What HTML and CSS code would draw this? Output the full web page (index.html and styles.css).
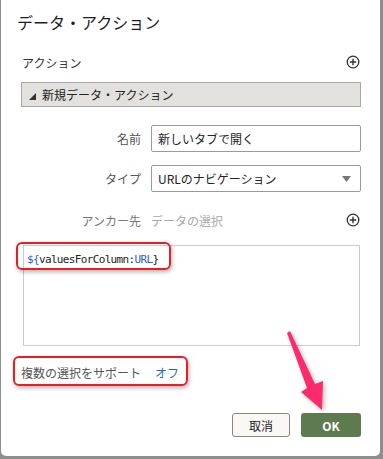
FILE: index.html
```html
<!DOCTYPE html>
<html lang="ja">
<head>
  <meta charset="UTF-8" />
  <meta name="viewport" content="width=device-width, initial-scale=1" />
  <title>データ・アクション</title>
  <link rel="stylesheet" href="styles.css">
</head>
<body>
  <div class="dialog">
    <h1 class="title">データ・アクション</h1>

    <div class="section-row">
      <span class="section-label">アクション</span>
      <svg class="plus" width="14" height="14" viewBox="0 0 14 14">
        <circle cx="7" cy="7" r="5.8" fill="none" stroke="#333" stroke-width="1.3"/>
        <path d="M7 3.8v6.4M3.8 7h6.4" stroke="#333" stroke-width="1.4"/>
      </svg>
    </div>

    <div class="action-head">
      <svg class="collapse" width="7" height="7" viewBox="0 0 7 7"><polygon points="7,0 7,7 0,7" fill="#333"/></svg>
      <span>新規データ・アクション</span>
    </div>

    <div class="field field-name">
      <label>名前</label>
      <div class="input">新しいタブで開く</div>
    </div>

    <div class="field field-type">
      <label>タイプ</label>
      <div class="input select">
        <span>URLのナビゲーション</span>
        <svg width="9" height="6" viewBox="0 0 9 6"><polygon points="0,0 9,0 4.5,6" fill="#777"/></svg>
      </div>
    </div>

    <div class="field field-anchor">
      <label>アンカー先</label>
      <div class="anchor-value">
        <span class="placeholder">データの選択</span>
        <svg class="plus" width="14" height="14" viewBox="0 0 14 14">
          <circle cx="7" cy="7" r="5.8" fill="none" stroke="#333" stroke-width="1.3"/>
          <path d="M7 3.8v6.4M3.8 7h6.4" stroke="#333" stroke-width="1.4"/>
        </svg>
      </div>
    </div>

    <div class="url-box">
      <code><span class="tok">${</span>valuesForColumn:<span class="tok">URL</span>}</code>
    </div>

    <div class="multi-row">
      <span class="multi-label">複数の選択をサポート</span>
      <span class="toggle">オフ</span>
    </div>

    <div class="buttons">
      <button class="btn btn-cancel">取消</button>
      <button class="btn btn-ok">OK</button>
    </div>

    <!-- annotations -->
    <div class="mark mark-url"></div>
    <div class="mark mark-multi"></div>
    <svg class="arrow" width="379" height="456" viewBox="0 0 379 456">
      <polygon points="287,333 290,331 315,384 323,381 322,410 301,392 307,388" fill="#ff2a6c"/>
    </svg>
  </div>
</body>
</html>
```

FILE: styles.css
```css
html, body {
  height: 100%;
}
body {
  margin: 0;
  background: #8e8e8e;
  font-family: "Noto Sans CJK JP", "Noto Sans", sans-serif;
  font-size: 12px;
  color: #333;
}
.dialog {
  position: relative;
  box-sizing: border-box;
  width: 379px;
  height: 456px;
  margin-left: 1px;
  background: #fff;
  border-radius: 0 0 5px 5px;
  padding: 10px 19px 0 20px;
}
.title {
  margin: 0;
  font-size: 16px;
  font-weight: normal;
  line-height: 24px;
  color: #1e1e1e;
  margin-left: -4px;
}
.section-row {
  display: flex;
  align-items: center;
  justify-content: space-between;
  height: 20px;
  margin-top: 18px;
  padding-left: 1px;
}
.plus {
  display: block;
  margin-right: 1px;
}
.action-head {
  display: flex;
  align-items: center;
  gap: 6px;
  box-sizing: border-box;
  height: 25px;
  margin-top: 10px;
  padding-left: 7px;
  background: #e3e1dd;
  border: 1px solid #aaa8a4;
  color: #222;
}
.collapse {
  margin-top: 3px;
}
.field {
  display: grid;
  grid-template-columns: 120px 1fr;
  column-gap: 10px;
  align-items: center;
}
.field label {
  text-align: right;
  color: #555;
}
.field-name {
  margin-top: 18px;
}
.field-type {
  margin-top: 13px;
}
.field-anchor {
  margin-top: 18px;
  height: 20px;
}
.field-anchor label {
  color: #777;
}
.input {
  box-sizing: border-box;
  height: 27px;
  border: 1px solid #9a9a9a;
  border-radius: 2px;
  padding: 0 6px;
  line-height: 25px;
  color: #222;
}
.select {
  display: flex;
  align-items: center;
  justify-content: space-between;
  padding-right: 9px;
}
.anchor-value {
  display: flex;
  align-items: center;
  justify-content: space-between;
}
.placeholder {
  color: #aaa;
}
.url-box {
  box-sizing: border-box;
  height: 101px;
  margin: 15px 1px 0 2px;
  border: 1px solid #ccc;
  padding: 3px 3px;
}
.url-box code {
  font-family: "DejaVu Sans Mono", monospace;
  font-size: 11px;
  letter-spacing: -0.65px;
  line-height: 14px;
  color: #222;
}
.tok {
  color: #2f5fc4;
}
.multi-row {
  display: flex;
  align-items: center;
  gap: 14px;
  height: 20px;
  margin-top: 16px;
  color: #555;
}
.toggle {
  color: #1a6fae;
}
.buttons {
  display: flex;
  justify-content: flex-end;
  gap: 11px;
  margin-top: 31px;
}
.btn {
  box-sizing: border-box;
  height: 24px;
  font-family: inherit;
  font-size: 12px;
  border-radius: 3px;
  padding: 0;
  cursor: pointer;
}
.btn-cancel {
  width: 58px;
  background: #faf8f5;
  border: 1px solid #8a8580;
  color: #222;
}
.btn-ok {
  width: 60px;
  background: #5e7a4f;
  border: none;
  color: #fff;
  font-weight: bold;
}
.mark {
  position: absolute;
  box-sizing: border-box;
  border: 2px solid #ea1c24;
  border-radius: 6px;
  box-shadow: 1px 2px 4px rgba(0,0,0,0.3);
}
.mark-url {
  left: 15px;
  top: 242px;
  width: 155px;
  height: 28px;
}
.mark-multi {
  left: 12px;
  top: 356px;
  width: 175px;
  height: 30px;
}
.arrow {
  position: absolute;
  left: -1px;
  top: 0;
  pointer-events: none;
  filter: drop-shadow(2px 2px 2px rgba(0,0,0,0.25));
}
```
